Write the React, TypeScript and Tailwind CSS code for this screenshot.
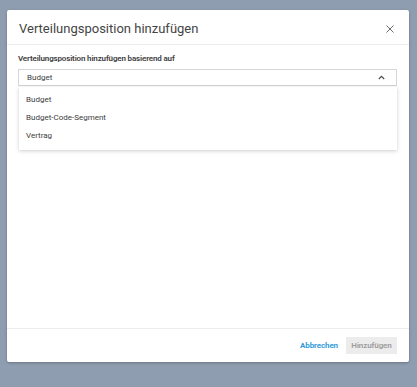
const options = ["Budget", "Budget-Code-Segment", "Vertrag"];

function CloseIcon() {
  return (
    <svg className="h-[8px] w-[8px]" viewBox="0 0 8 8" fill="none" stroke="#6b6b6b" strokeWidth={1}>
      <path d="M0.5 0.5l7 7M7.5 0.5l-7 7" />
    </svg>
  );
}

function ChevronUp() {
  return (
    <svg className="h-[5px] w-[7px]" viewBox="0 0 7 5" fill="none" stroke="#4a4a4a" strokeWidth={1.1}>
      <path d="M0.8 4L3.5 1.3 6.2 4" />
    </svg>
  );
}

export default function App() {
  return (
    <div
      className="flex h-[387px] w-[417px] items-start bg-[#8e9db0] pl-[7px] pt-[10px]"
      style={{ fontFamily: "Roboto, 'Liberation Sans', sans-serif" }}
    >
      <div className="flex h-[352px] w-[402px] flex-col rounded-[2px] bg-white shadow-[0_1px_3px_rgba(0,0,0,0.25)]">
        {/* header */}
        <div className="flex h-[35px] shrink-0 items-center justify-between border-b border-[#ececec] pl-[12px] pr-[14px] pt-[3px]">
          <h2 className="text-[13px] leading-none text-[#444]">Verteilungsposition hinzufügen</h2>
          <button className="flex h-[10px] w-[10px] items-center justify-center" aria-label="Schließen">
            <CloseIcon />
          </button>
        </div>

        {/* body */}
        <div className="flex-1 px-[11px] pt-[9px]">
          <label className="block text-[8px] font-semibold leading-[10px] tracking-[-0.15px] text-[#3c3c3c]">
            Verteilungsposition hinzufügen basierend auf
          </label>
          <div className="relative mt-[5px] mr-[1px]">
            <div className="flex h-[17px] items-center justify-between border border-[#d6d6d6] pl-[8px] pr-[11px]">
              <span className="text-[8px] text-[#3c3c3c]">Budget</span>
              <ChevronUp />
            </div>
            <ul className="absolute left-[1px] right-0 top-[18px] bg-white pt-[4px] pb-[5px] shadow-[0_1px_4px_rgba(0,0,0,0.2)]">
              {options.map((o) => (
                <li key={o} className="flex h-[18px] items-center px-[7px] text-[8px] text-[#3c3c3c]">
                  {o}
                </li>
              ))}
            </ul>
          </div>
        </div>

        {/* footer */}
        <div className="flex h-[34px] shrink-0 items-center justify-end gap-[8px] border-t border-[#ececec] pr-[12px]">
          <button className="text-[8px] font-semibold tracking-[-0.1px] text-[#1f96d8]">Abbrechen</button>
          <button className="flex h-[17px] w-[51px] items-center justify-center bg-[#ececec] text-[8px] font-semibold tracking-[-0.1px] text-[#9b9b9b]">
            Hinzufügen
          </button>
        </div>
      </div>
    </div>
  );
}
